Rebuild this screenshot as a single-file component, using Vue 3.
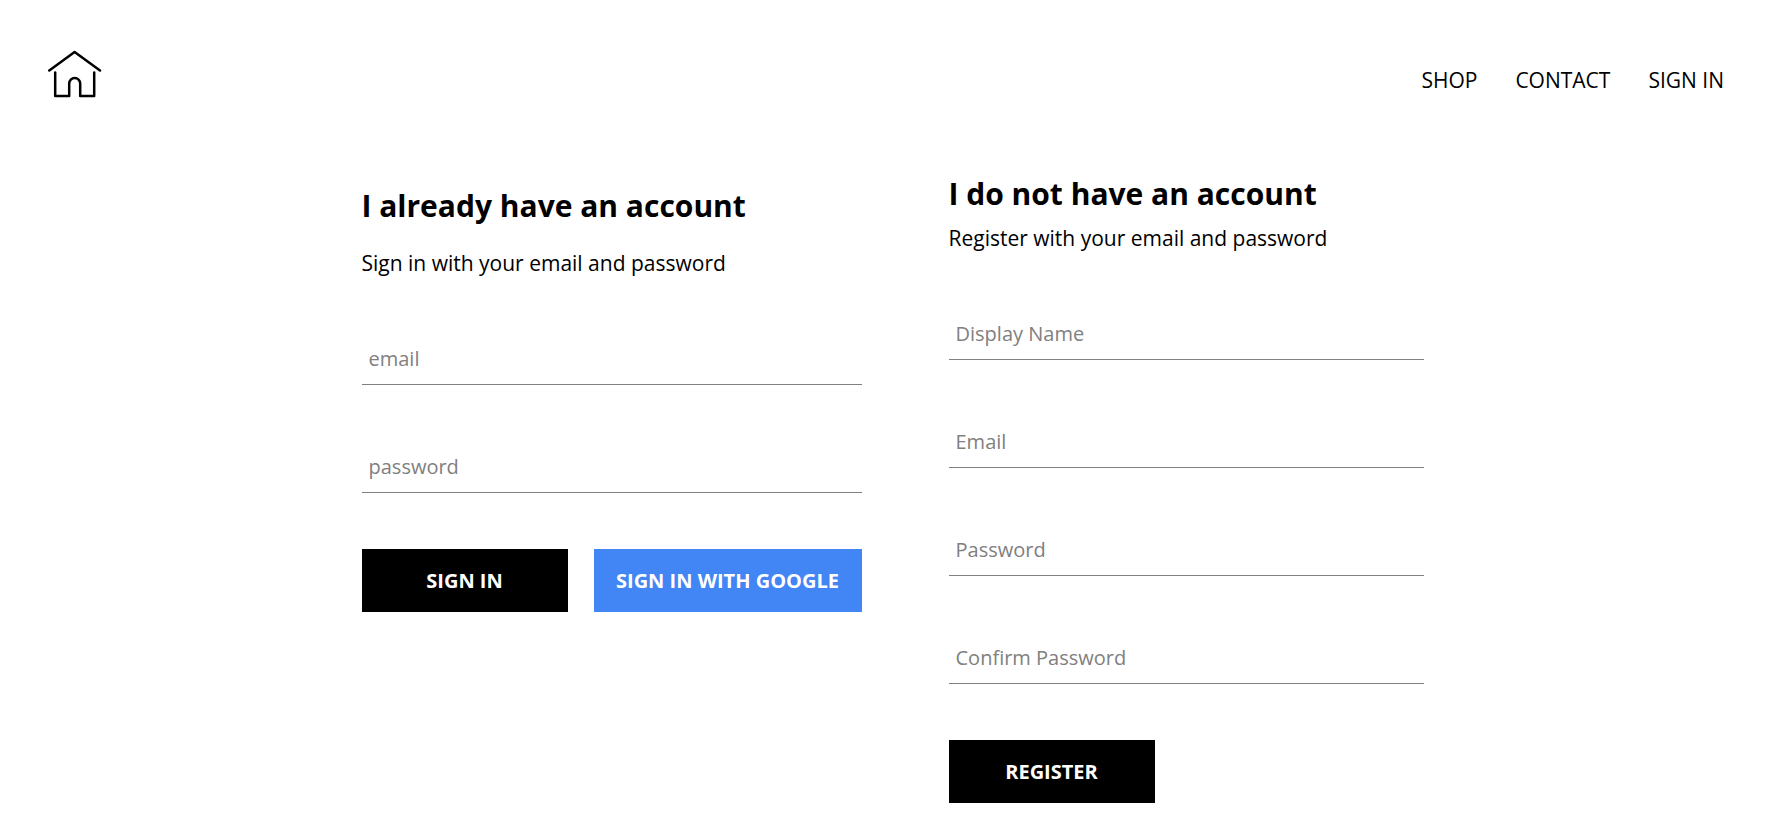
<script setup>
import { reactive } from 'vue'

const links = ['SHOP', 'CONTACT', 'SIGN IN']

const signInFields = [
  { key: 'email', label: 'email', type: 'email' },
  { key: 'password', label: 'password', type: 'password' },
]
const registerFields = [
  { key: 'displayName', label: 'Display Name', type: 'text' },
  { key: 'email', label: 'Email', type: 'email' },
  { key: 'password', label: 'Password', type: 'password' },
  { key: 'confirmPassword', label: 'Confirm Password', type: 'password' },
]

const signIn = reactive({ email: '', password: '' })
const register = reactive({ displayName: '', email: '', password: '', confirmPassword: '' })
</script>

<template>
  <div class="page">
    <header class="header">
      <a class="logo" href="#" aria-label="Home">
        <svg width="54" height="52" viewBox="0 0 54 52" fill="none" stroke="#000" stroke-width="2.5" stroke-linecap="round" stroke-linejoin="round">
          <path d="M1.3 22.5 L26.6 4 L52 22.5" />
          <path d="M7.2 24.5 V48 H21.2 V35.5 A5.5 5.5 0 0 1 32.2 35.5 V48 H46.2 V24.5" />
        </svg>
      </a>
      <nav class="nav">
        <a v-for="link in links" :key="link" href="#">{{ link }}</a>
      </nav>
    </header>

    <main class="forms">
      <section class="sign-in">
        <h2>I already have an account</h2>
        <p>Sign in with your email and password</p>
        <form @submit.prevent>
          <input
            v-for="field in signInFields"
            :key="field.key"
            v-model="signIn[field.key]"
            :type="field.type"
            :placeholder="field.label"
            :aria-label="field.label"
          />
          <div class="buttons">
            <button type="submit">SIGN IN</button>
            <button type="button" class="google">SIGN IN WITH GOOGLE</button>
          </div>
        </form>
      </section>

      <section class="register">
        <h2>I do not have an account</h2>
        <p>Register with your email and password</p>
        <form @submit.prevent>
          <input
            v-for="field in registerFields"
            :key="field.key"
            v-model="register[field.key]"
            :type="field.type"
            :placeholder="field.label"
            :aria-label="field.label"
          />
          <div class="buttons">
            <button type="submit">REGISTER</button>
          </div>
        </form>
      </section>
    </main>
  </div>
</template>

<style>
body {
  margin: 0;
  background: #fff;
}
</style>

<style scoped>
.page {
  padding: 24px 36px 20px 48px;
  color: #000;
  font-family: "Open Sans", "Noto Sans", sans-serif;
  font-size: 21px;
  line-height: 28px;
}

.header {
  display: flex;
  justify-content: space-between;
  align-items: center;
  padding-top: 24px;
}

.logo {
  display: flex;
}

.nav {
  display: flex;
  gap: 38px;
  padding: 12px 13px 0 0;
}

.nav a {
  color: inherit;
  text-decoration: none;
}

.forms {
  display: flex;
  align-items: flex-start;
  justify-content: space-between;
  max-width: 1062px;
  margin: 74px auto 0;
}

.sign-in {
  width: 500px;
  padding-top: 12px;
}

.sign-in h2 {
  margin-bottom: 23px;
}

.register {
  width: 475px;
}

h2 {
  margin: 0 0 10px;
  font-size: 30px;
  line-height: 40px;
}

p {
  margin: 0;
}

form {
  display: flex;
  flex-direction: column;
  gap: 56px;
  padding-top: 56px;
}

input {
  box-sizing: border-box;
  width: 100%;
  height: 52px;
  padding: 10px 7px 11px;
  border: 0;
  border-bottom: 1px solid #808080;
  border-radius: 0;
  outline: none;
  background: #fff;
  color: #808080;
  font: inherit;
  font-size: 20px;
}

input::placeholder {
  color: #808080;
  opacity: 1;
}

.buttons {
  display: flex;
  justify-content: space-between;
}

button {
  min-width: 206px;
  height: 63px;
  padding: 0 22px;
  border: 0;
  background: #000;
  color: #fff;
  font: inherit;
  font-size: 20px;
  font-weight: 700;
  white-space: nowrap;
  cursor: pointer;
}

.google {
  min-width: 268px;
  background: #4285f4;
}
</style>
